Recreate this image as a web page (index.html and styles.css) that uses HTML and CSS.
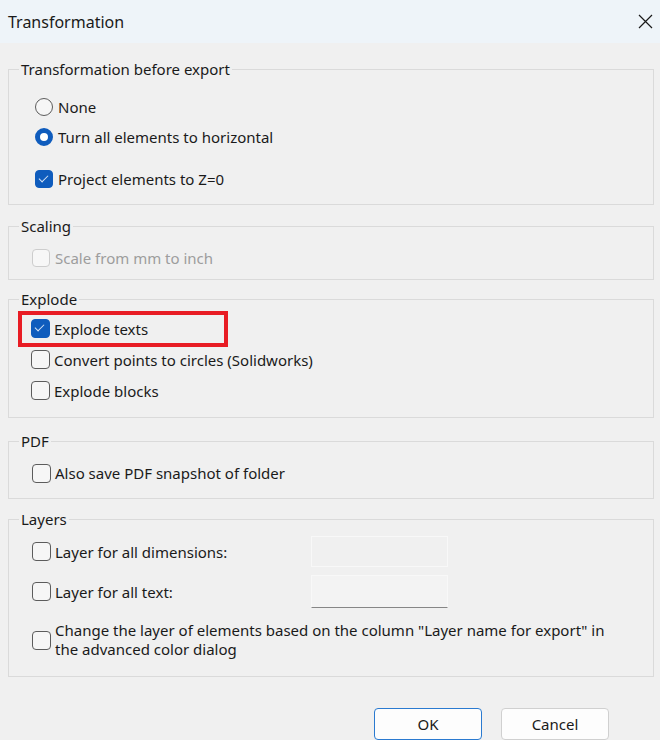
FILE: index.html
```html
<!DOCTYPE html>
<html lang="en">
<head>
  <meta charset="UTF-8" />
  <title>Transformation</title>
  <link rel="stylesheet" href="styles.css">
</head>
<body>
  <div class="titlebar">
    <span class="title">Transformation</span>
    <svg class="close" width="15" height="15" viewBox="0 0 15 15">
      <path d="M1 1 L14 14 M14 1 L1 14" stroke="#1a1a1a" stroke-width="1.2" fill="none"/>
    </svg>
  </div>

  <div class="dialog">
    <fieldset class="group g-transform">
      <legend>Transformation before export</legend>
      <label class="row first"><span class="radio"></span>None</label>
      <label class="row"><span class="radio on"></span>Turn all elements to horizontal</label>
      <label class="row project"><span class="box on"></span>Project elements to Z=0</label>
    </fieldset>

    <fieldset class="group g-scaling">
      <legend>Scaling</legend>
      <label class="row disabled"><span class="box"></span>Scale from mm to inch</label>
    </fieldset>

    <fieldset class="group g-explode">
      <legend>Explode</legend>
      <label class="row marked"><span class="box on"></span>Explode texts</label>
      <label class="row"><span class="box"></span>Convert points to circles (Solidworks)</label>
      <label class="row"><span class="box"></span>Explode blocks</label>
    </fieldset>

    <fieldset class="group g-pdf">
      <legend>PDF</legend>
      <label class="row"><span class="box"></span>Also save PDF snapshot of folder</label>
    </fieldset>

    <fieldset class="group g-layers">
      <legend>Layers</legend>
      <div class="layer-row r1">
        <label class="row"><span class="box"></span>Layer for all dimensions:</label>
        <div class="field"></div>
      </div>
      <div class="layer-row r2">
        <label class="row"><span class="box"></span>Layer for all text:</label>
        <div class="field"></div>
      </div>
      <label class="row multi"><span class="box"></span><span>Change the layer of elements based on the column "Layer name for export" in<br>the advanced color dialog</span></label>
    </fieldset>

    <div class="buttons">
      <button class="btn primary">OK</button>
      <button class="btn">Cancel</button>
    </div>
  </div>
</body>
</html>
```

FILE: styles.css
```css
body { margin: 0; background: #f0f0f0; font-family: "Noto Sans", sans-serif; font-size: 15px; color: #1a1a1a; height: 740px; overflow: hidden; }

.titlebar { height: 43px; background: #eef4f9; display: flex; align-items: center; justify-content: space-between; padding: 0 7px 0 8px; }
.title { font-size: 16px; }
.close { display: block; }

.dialog { padding: 16px 6px 0 8px; }

.group { margin: 0; padding: 0; border: 1px solid #dadada; min-width: 0; }
.group legend { margin-left: 10px; padding: 0 2px; line-height: 20px; height: 20px; }

.row { display: flex; align-items: center; height: 30px; gap: 5px; }

.radio { width: 16px; height: 16px; border: 1px solid #5c5c5c; border-radius: 50%; background: #f6f6f6; flex: none; }
.radio.on { width: 8px; height: 8px; border: 5px solid #0f5cbd; background: #fff; }

.box { position: relative; width: 16px; height: 16px; border: 1px solid #5c5c5c; border-radius: 4px; background: #f6f6f6; flex: none; }
.box.on { background: #0f5cbd; border-color: #0f5cbd; }
.box.on::after { content: ""; position: absolute; left: 5px; top: 2px; width: 4px; height: 8px; border: solid #d6e4f6; border-width: 0 1.5px 1.5px 0; transform: rotate(45deg); }

.g-transform .row { padding-left: 26px; }
.g-transform .first { margin-top: 13px; }
.g-transform .project { margin-top: 12px; }
.g-transform { padding-bottom: 10px; }

.g-scaling { margin-top: 11px; padding-bottom: 6px; }
.g-scaling .row { padding-left: 23px; margin-top: 7px; }
.disabled { color: #9d9d9d; }
.disabled .box { border-color: #cdcdcd; background: #f7f7f7; }

.g-explode { margin-top: 9px; padding-top: 4px; padding-bottom: 11px; }
.g-explode .row { padding-left: 22px; height: 31px; gap: 4px; }
.g-explode .box, .g-pdf .box, .g-layers .box { width: 17px; height: 17px; }
.marked { position: relative; }
.marked::after { content: ""; position: absolute; left: 9px; top: -2px; width: 202px; height: 28px; border: 4px solid #e81c24; }

.g-pdf .row, .g-layers .row { padding-left: 23px; gap: 4px; }

.g-pdf { margin-top: 13px; padding-bottom: 10px; }
.g-pdf .row { margin-top: 7px; }

.g-layers { margin-top: 10px; padding-bottom: 17px; }
.layer-row { display: grid; grid-template-columns: 302px 137px; align-items: center; }
.layer-row .row { height: auto; }
.r1 { margin-top: 7px; height: 31px; }
.r2 { margin-top: 8px; height: 33px; }
.field { border: 1px solid #f8f8f8; background: #f0f0f0; box-sizing: border-box; }
.r1 .field { height: 31px; }
.r2 .field { height: 33px; border-bottom: 1px solid #868686; background: #f3f3f3; }
.row.multi { height: auto; margin-top: 13px; line-height: 19px; }

.buttons { display: flex; justify-content: flex-end; gap: 19px; margin-top: 31px; padding-right: 45px; }
.btn { width: 108px; height: 32px; font-family: "Noto Sans", sans-serif; font-size: 15px; color: #1a1a1a; background: #fdfdfd; border: 1px solid #d0d0d0; border-radius: 4px; }
.btn.primary { border: 1.5px solid #2a7ad0; }
```
